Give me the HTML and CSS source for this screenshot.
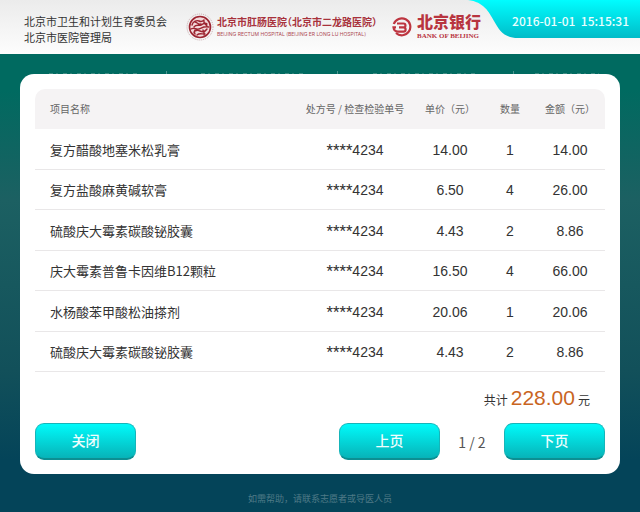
FILE: index.html
```html
<!DOCTYPE html>
<html lang="zh-CN">
<head>
    <meta charset="UTF-8">
    <meta name="viewport" content="width=device-width, initial-scale=1.0">
    <title>费用明细</title>
    <link rel="stylesheet" href="styles.css">
</head>
<body>

<header class="top-bar">
    <div class="authority">
        <div>北京市卫生和计划生育委员会</div>
        <div>北京市医院管理局</div>
    </div>
    <div class="hospital">
        <svg class="seal" viewBox="0 0 28 28" fill="none">
            <circle cx="14" cy="14" r="13" stroke="#c9a9ac" stroke-width="1" stroke-dasharray="1 1"/>
            <circle cx="14" cy="14" r="10.5" fill="#f3d9da" stroke="#9c2531" stroke-width="1.6"/>
            <path d="M6 12c1-4 5-5 7-4s3 1 5-1M8 14c2-3 5-1 7-2s4-3 6-1M5 16c3-2 5 1 8 0s4-3 10-2M8 20c0-3 4-3 6-2s5 1 7-2M11 22c2-2 4-1 8-1M9 9c2 0 3 3 6 2M18 8c-1 3 2 3 3 5M10 17c-2 0-2 2-1 4M17 17c0 2 2 2 1 5" stroke="#9c2531" stroke-width="1.4" stroke-linecap="round"/>
        </svg>
        <div>
            <div class="hospital-name">北京市肛肠医院（北京市二龙路医院）</div>
            <div class="hospital-en">BEIJING RECTUM HOSPITAL (BEIJING ER LONG LU HOSPITAL)</div>
        </div>
    </div>
    <div class="bank">
        <svg class="bank-logo" viewBox="0 0 20 20" fill="none" stroke="#bd3540">
            <path d="M1.800 7A8.500 8.500 0 1 1 4 16" stroke-width="2.200"/>
            <path d="M5 6.500H11.500a1.900 1.900 0 0 1 0 3.900H7M11.500 10.400a2.100 2.100 0 0 1 0 4.200H6A4.500 4.500 0 0 1 1.500 10.400H4" stroke-width="2.200"/>
        </svg>
        <div>
            <div class="bank-name">北京银行</div>
            <div class="bank-en">BANK OF BEIJING</div>
        </div>
    </div>
    <div class="clock">
        <svg class="clock-bg" viewBox="0 0 180 38" preserveAspectRatio="none">
            <defs>
                <linearGradient id="clockFill" x1="0" y1="0" x2="0" y2="1">
                    <stop offset="0" stop-color="#00fdff"/>
                    <stop offset="1" stop-color="#00bcc8"/>
                </linearGradient>
            </defs>
            <path d="M8 0C24 2 29 12 34 21C39 30 44 38 58 38H180V0Z" fill="url(#clockFill)"/>
        </svg>
        <time class="clock-text" datetime="2016-01-01T15:15:31">2016-01-01&nbsp; 15:15:31</time>
    </div>
</header>

<!-- 面板后方露出的导航边缘 -->
<div class="nav-edge">
    <span class="nav-cell"><i></i></span>
    <span class="nav-cell"><i></i></span>
    <span class="nav-cell"><i></i></span>
    <span class="nav-cell"><i></i></span>
</div>

<main class="panel">
    <table class="fees">
        <thead>
            <tr>
                <th class="col-name">项目名称</th>
                <th class="col-code">处方号 / 检查检验单号</th>
                <th class="col-price">单价（元）</th>
                <th class="col-count">数量</th>
                <th class="col-sum">金额（元）</th>
            </tr>
        </thead>
        <tbody>
            <tr><td>复方醋酸地塞米松乳膏</td><td><span class="mask">****</span>4234</td><td>14.00</td><td>1</td><td>14.00</td></tr>
            <tr><td>复方盐酸麻黄碱软膏</td><td><span class="mask">****</span>4234</td><td>6.50</td><td>4</td><td>26.00</td></tr>
            <tr><td>硫酸庆大霉素碳酸铋胶囊</td><td><span class="mask">****</span>4234</td><td>4.43</td><td>2</td><td>8.86</td></tr>
            <tr><td>庆大霉素普鲁卡因维B12颗粒</td><td><span class="mask">****</span>4234</td><td>16.50</td><td>4</td><td>66.00</td></tr>
            <tr><td>水杨酸苯甲酸松油搽剂</td><td><span class="mask">****</span>4234</td><td>20.06</td><td>1</td><td>20.06</td></tr>
            <tr><td>硫酸庆大霉素碳酸铋胶囊</td><td><span class="mask">****</span>4234</td><td>4.43</td><td>2</td><td>8.86</td></tr>
        </tbody>
    </table>

    <div class="total">共计<strong class="amount">228.00</strong>元</div>

    <div class="actions">
        <button type="button" class="btn">关闭</button>
        <div class="pager">
            <button type="button" class="btn">上页</button>
            <span class="page">1 / 2</span>
            <button type="button" class="btn">下页</button>
        </div>
    </div>
</main>

<footer class="help">如需帮助，请联系志愿者或导医人员</footer>

</body>
</html>
```

FILE: styles.css
```css
* {
    box-sizing: border-box;
}
body {
    margin: 0;
    min-height: 100vh;
    font-family: "Noto Sans CJK SC", sans-serif;
    color: #333;
    background: linear-gradient(#006a60 0, #006a60 90px, #1c6062 200px, #12505a 370px, #044459 460px, #044459 100%);
}

/* 顶部 */
.top-bar {
    position: relative;
    display: flex;
    height: 54px;
    padding-left: 24px;
    background: linear-gradient(#ebebeb, #fdfdfd);
}
.authority {
    width: 162px;
    padding-top: 13px;
    font-size: 11px;
    line-height: 16px;
    white-space: nowrap;
}
.hospital {
    display: flex;
    gap: 3px;
    width: 206px;
    padding-top: 13px;
    white-space: nowrap;
}
.seal {
    width: 28px;
    height: 28px;
}
.hospital-name {
    font-size: 10px;
    line-height: 18px;
    font-weight: 700;
    font-feature-settings: "halt";
    color: #a8323c;
}
.hospital-en {
    font-family: Inter, "Liberation Sans", sans-serif;
    font-size: 5px;
    line-height: 6px;
    color: #ad4a54;
}
.bank {
    display: flex;
    gap: 5px;
    padding-top: 11px;
    white-space: nowrap;
    color: #b8353f;
}
.bank-logo {
    width: 20px;
    height: 20px;
    margin-top: 6px;
}
.bank-name {
    font-size: 16px;
    line-height: 21px;
    font-weight: 900;
}
.bank-en {
    font-family: "Liberation Serif", serif;
    font-size: 7px;
    line-height: 8px;
    font-weight: 700;
}
.clock {
    position: absolute;
    top: 0;
    right: 0;
    width: 180px;
    height: 38px;
}
.clock-bg {
    display: block;
    width: 100%;
    height: 100%;
}
.clock-text {
    position: absolute;
    top: 0;
    right: 11px;
    font-size: 12px;
    line-height: 42px;
    font-weight: 500;
    white-space: nowrap;
    color: #e9ffff;
}

.nav-edge {
    display: grid;
    grid-template-columns: 147fr 171fr 176fr 106fr;
    align-items: end;
    height: 20px;
    padding: 0 20px;
}
.nav-cell {
    display: flex;
    align-items: end;
    justify-content: center;
    height: 3px;
    border-right: 1px solid #4d958e;
}
.nav-cell:last-child {
    border-right: 0;
}
.nav-cell i {
    width: 60%;
    height: 1px;
    background: repeating-linear-gradient(90deg, #3f8b83 0 4px, #006a60 4px 7px, #2d8077 7px 9px, #006a60 9px 14px);
}

/* 明细面板 */
.panel {
    margin: 0 20px;
    padding: 15px 15px 14px;
    border-radius: 14px;
    background: #fff;
}
.fees {
    width: 100%;
    height: 283px;
    border-spacing: 0;
    table-layout: fixed;
    text-align: center;
    white-space: nowrap;
}
.fees th {
    height: 40px;
    padding: 0;
    font-size: 10px;
    line-height: 16px;
    font-weight: 400;
    color: #666;
    background: #f5f3f4;
}
.fees th:first-child {
    border-top-left-radius: 10px;
}
.fees th:last-child {
    border-top-right-radius: 10px;
}
.fees td {
    padding: 2px 0 0;
    font-family: "Liberation Sans", "Noto Sans CJK SC", sans-serif;
    font-size: 14px;
    line-height: 20px;
    border-bottom: 1px solid #e9e7e8;
}
.fees th:first-child,
.fees td:first-child {
    padding-left: 15px;
    text-align: left;
}
.fees td:first-child {
    font-family: "Noto Sans CJK SC", sans-serif;
    font-size: 13px;
}
.col-code {
    width: 120px;
}
.col-price,
.col-sum {
    width: 70px;
}
.col-count {
    width: 50px;
}
.mask {
    font-family: Roboto, "Liberation Sans", sans-serif;
    font-size: 15px;
}
.total {
    padding: 11px 15px 8px 0;
    font-size: 12px;
    line-height: 30px;
    text-align: right;
}
.amount {
    margin: 0 3px;
    font-family: "Liberation Sans", sans-serif;
    font-size: 21px;
    font-weight: 400;
    color: #c9651f;
}
.actions,
.pager {
    display: flex;
    align-items: center;
    justify-content: space-between;
}
.btn {
    width: 101px;
    height: 37px;
    padding: 0 0 2px;
    border: 1px solid #16b5b9;
    border-bottom: 2px solid #0c8f92;
    border-radius: 9px;
    font-family: inherit;
    font-size: 14px;
    font-weight: 500;
    color: #effefe;
    background: linear-gradient(#00fafa, #07b3b8);
    cursor: pointer;
}
.page {
    width: 64px;
    font-size: 14px;
    line-height: 20px;
    text-align: center;
    color: #555;
}

.help {
    padding-top: 17px;
    font-size: 9px;
    line-height: 16px;
    text-align: center;
    color: #4f7a87;
}
```
